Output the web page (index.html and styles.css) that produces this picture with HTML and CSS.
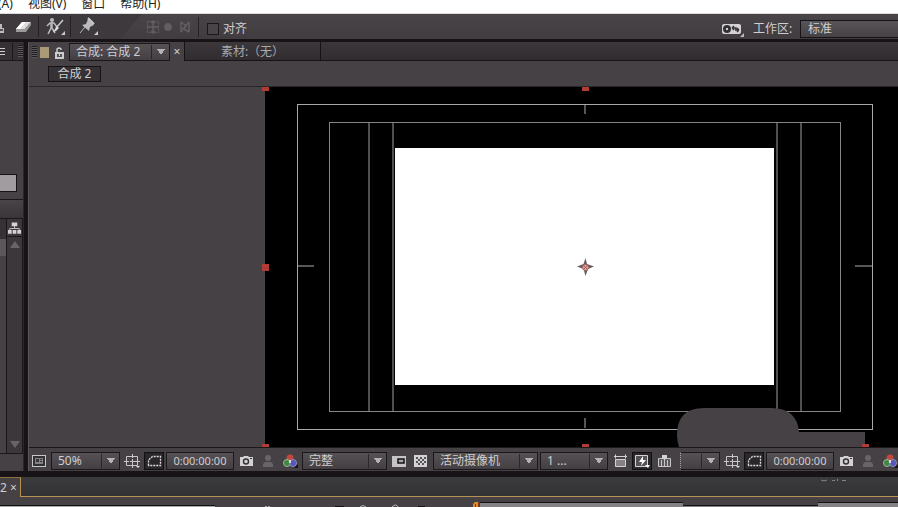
FILE: index.html
```
<!DOCTYPE html>
<html lang="zh-CN">
<head>
    <meta charset="UTF-8">
    <meta name="viewport" content="width=device-width, initial-scale=1.0">
    <title>合成 2</title>
    <link rel="stylesheet" href="styles.css">
</head>
<body>
    <!-- 图标定义 -->
    <svg class="defs" aria-hidden="true">
        <symbol id="i-view" viewBox="0 0 16 16">
            <rect x="1.500" y="2.500" width="13" height="11" fill="#333" stroke="#c9c6c9"/>
            <path d="M4 5h8v6H4z" fill="#858285"/>
            <path d="M5 6h3v3H5zM9 6h2v1H9zM9 8h2v1H9z" fill="#3a373a"/>
        </symbol>
        <symbol id="i-guides" viewBox="0 0 16 16">
            <path d="M2.500 3.500h11v9h-11zM0 8.500h5M11 8.500h5M8.500 1v4M8.500 11v4M6 8.500h5M8.500 6v5" fill="none" stroke="#c9c6c9"/>
            <path d="M12 13h4l-2 2z" fill="#ddd"/>
        </symbol>
        <symbol id="i-mask" viewBox="0 0 16 16">
            <path d="M2.500 12.500V7l4-3.500h8v9z" fill="none" stroke="#e0dde0" stroke-width="1.300" stroke-dasharray="2 1"/>
        </symbol>
        <symbol id="i-camera" viewBox="0 0 16 16">
            <path d="M2 4h3l1-1h4l1 1h4v9H2z" fill="#d5d2d5"/>
            <circle cx="8" cy="8.500" r="2.500" fill="#d5d2d5" stroke="#333" stroke-width="1.400"/>
            <path d="M12 5h2v1h-2z" fill="#333"/>
        </symbol>
        <symbol id="i-person" viewBox="0 0 16 16">
            <circle cx="8" cy="5" r="3" fill="#686568"/>
            <path d="M3 14v-3l2-2h6l2 2v3z" fill="#686568"/>
        </symbol>
        <symbol id="i-rgb" viewBox="0 0 16 16">
            <circle cx="8" cy="5" r="3.500" fill="#c4473d"/>
            <circle cx="5" cy="10" r="3.500" fill="#438546" stroke="#98ba97"/>
            <circle cx="11" cy="10" r="3.500" fill="#5457b7" stroke="#8a88bd"/>
            <path d="M7 7h2v3H7z" fill="#ddd"/>
            <path d="M16 11v4h-4z" fill="#161416"/>
        </symbol>
        <symbol id="i-roi" viewBox="0 0 16 16">
            <path d="M1 3h14v11H1z" fill="#c6c3c6"/>
            <path d="M7 6h6v4H7z" fill="#aaa" stroke="#111" stroke-width="1.500"/>
        </symbol>
        <symbol id="i-checker" viewBox="0 0 16 16">
            <path d="M1 2h13v12H1z" fill="#d5d2d5"/>
            <path d="M3 4h2v2H3zM7 4h2v2H7zM11 4h2v2h-2zM5 6h2v2H5zM9 6h2v2H9zM3 8h2v2H3zM7 8h2v2H7zM11 8h2v2h-2zM5 10h2v2H5zM9 10h2v2H9z" fill="#575457"/>
        </symbol>
        <symbol id="i-aspect" viewBox="0 0 16 16">
            <path d="M3.500 6.500h10v7h-10z" fill="#858285" stroke="#d5d2d5"/>
            <path d="M2 3.500h13M3.500 1.500v4M13.500 1.500v4" stroke="#d5d2d5" fill="none"/>
        </symbol>
        <symbol id="i-fast" viewBox="0 0 16 16">
            <path d="M1.500 2.500h12v11h-12z" fill="#555255" stroke="#d5d2d5"/>
            <path d="M9 3L5 9h3l-1 4 5-6H9z" fill="#fff"/>
            <path d="M11 12h5l-2 3z" fill="#fff"/>
        </symbol>
        <symbol id="i-timeline" viewBox="0 0 16 16">
            <path d="M2.500 5.500h12v8h-12zM5.500 7v6M8.500 4v10M11.500 7v6" fill="#5c595c" stroke="#c9c6c9"/>
            <path d="M6 2h5v3L8.500 7 6 5z" fill="#d5d2d5"/>
        </symbol>
        <symbol id="i-tree" viewBox="0 0 16 16">
            <path d="M8 5v4M3 12V8.500h10V12" fill="none" stroke="#c9c6c9"/>
            <path d="M5 2h6v4H5zM1 10h4v4H1zM6 10h4v4H6zM11 10h4v4h-4z" fill="#d5d2d5"/>
        </symbol>
    </svg>

    <nav class="menubar">
        <a href="#">(A)</a>
        <a href="#">视图(V)</a>
        <a href="#">窗口</a>
        <a href="#">帮助(H)</a>
    </nav>

    <!-- 工具栏 -->
    <header class="toolbar">
        <div class="tools">
            <button class="tool stamp" aria-label="仿制图章"><svg width="6" height="20" viewBox="0 0 6 20"><path d="M0 7h2v4h2v5H0z" fill="#bbb"/><path d="M0 12h3v2H0z" fill="#555"/></svg></button>
            <button class="tool eraser" aria-label="橡皮擦"><svg width="18" height="20" viewBox="0 0 18 20"><path d="M8 5h9l-6 7H2z" fill="#ddd"/><path d="M2 12h9l6-7v3l-5 7H2z" fill="#999"/><path d="M8 5h4l-6 7H2z" fill="#fff"/></svg></button>
            <button class="tool roto" aria-label="Roto 笔刷"><svg width="22" height="22" viewBox="0 0 22 22"><circle cx="7" cy="4" r="2" fill="#bbb"/><path d="M2 10l3-3h4l3 4M6 7v5l-3 6M7 12l3 5M7 6v6" fill="none" stroke="#bbb" stroke-width="1.500"/><path d="M18 4l-7 8" stroke="#ccc" stroke-width="1.500"/><path d="M12 10l2 2-3 3-3 1z" fill="#ddd"/><path d="M20 15v4h-4z" fill="#ccc"/></svg></button>
            <button class="tool pin" aria-label="操控点"><svg width="22" height="22" viewBox="0 0 22 22"><path d="M10 3l6 6-2 1-2 1-1 4-7-6 4-1z" fill="#bbb"/><path d="M7 11l-5 6" stroke="#bbb"/><path d="M10 2l6 6" stroke="#ccc" stroke-width="2"/><path d="M20 15v4h-4z" fill="#ccc"/></svg></button>
        </div>
        <div class="axes">
            <svg width="46" height="14" viewBox="0 0 46 14" fill="none" stroke="#625f62"><path d="M1.500 1.500h11v11h-11z" stroke-dasharray="2 1"/><path d="M7 1v12M1 7h12M5 3l2-2 2 2M5 11l2 2 2-2" stroke-width="1.500"/><circle cx="22" cy="7" r="3.500" fill="#625f62"/><path d="M35 2v10M43 2v10M35 2l4 3M43 2l-8 10M36 8l7 4M39 4v4" stroke-width="1.500"/></svg>
        </div>
        <label class="snap"><input type="checkbox">对齐</label>
        <div class="workspace-pick">
            <svg width="24" height="16" viewBox="0 0 24 16"><rect x="1" y="3" width="19" height="10" rx="2" fill="#d5d2d5"/><circle cx="6" cy="8" r="2.500" fill="none" stroke="#333" stroke-width="3"/><circle cx="6" cy="8" r="1" fill="#ddd"/><path d="M11 7h4v2M11 7l2-2M11 7l2 2M14 9h4M18 9l-2-2M18 9l-2 2" stroke="#333" fill="none" stroke-width="1.300"/><path d="M23 12v4h-4z" fill="#bbb"/></svg>
            <label for="workspace">工作区:</label>
            <select id="workspace"><option>标准</option></select>
        </div>
    </header>

    <main class="workspace">
        <!-- 项目面板 -->
        <aside class="project">
            <div class="project-tabs"><span class="lines"></span><span class="grip"></span></div>
            <div class="project-info"><button class="thumb" aria-label="缩览图"></button></div>
            <div class="project-search"></div>
            <div class="project-list">
                <div class="rows"></div>
                <div class="scroll">
                    <button class="flow" aria-label="流程图"><svg width="15" height="16"><use href="#i-tree"/></svg></button>
                    <span class="arrow up"></span>
                    <span class="arrow down"></span>
                </div>
            </div>
            <div class="project-foot"></div>
        </aside>

        <!-- 合成面板 -->
        <section class="comp">
            <div class="comp-tabs">
                <div class="comp-active">
                    <span class="grip"></span>
                    <span class="label-color"></span>
                    <svg width="9" height="13" viewBox="0 0 9 13"><path d="M1 7h7v5H1z" fill="#555" stroke="#ccc" stroke-width="2"/><path d="M2 6V3q2-2 4 0v1" fill="none" stroke="#ccc" stroke-width="1.500"/><path d="M4 8h1v2H4z" fill="#ddd"/></svg>
                    <span class="drop tab-drop"><select aria-label="合成"><option>合成: 合成 2</option></select></span>
                    <button class="close" aria-label="关闭">×</button>
                </div>
                <button class="footage">素材:（无）</button>
            </div>
            <div class="comp-path"><button>合成 2</button></div>
            <div class="stage">
                <!-- 640x360 画布，带安全框 -->
                <svg class="canvas" width="640" height="360" viewBox="0 0 640 360">
                    <rect width="640" height="360" fill="#000"/>
                    <path d="M104 36v288M128 36v288M512 36v288M536 36v288" stroke="#504e50" stroke-width="2"/>
                    <rect x="130" y="61" width="379" height="237" fill="#fff"/>
                    <g fill="none">
                        <rect x="32.500" y="17.500" width="575" height="325" stroke="#a8a8a8"/>
                        <rect x="64.500" y="35.500" width="511" height="289" stroke="#858585"/>
                        <path d="M320 18v9M320 331v10M33 179h16M590 179h17" stroke="#585658" stroke-width="2"/>
                    </g>
                    <path d="M320.500 171l1.500 6 7 2.500-6 2.500-2.500 7-2-7-6.500-2.500 6.500-2.500z" fill="#6c5a60"/>
                    <circle cx="320.500" cy="180.500" r="3" fill="#d9a7a5" stroke="#a3605c"/>
                    <path d="M319 179l3 3M322 179l-3 3" stroke="#a3605c"/>
                    <path d="M414 360q-2-6-2-12 0-27 27-27h67q26 0 28 24h66v15z" fill="#454145"/>
                    <path d="M-3 0h7v4h-7zM317 0h7v4h-7zM-3 177h7v7h-7zM-3 357h7v3h-7zM317 357h7v3h-7zM597 357h7v3h-7z" fill="#b23b35"/>
                </svg>
            </div>
            <div class="comp-foot">
                <button class="icon" aria-label="始终预览"><svg width="16" height="16"><use href="#i-view"/></svg></button>
                <span class="drop zoom"><select aria-label="放大率"><option>50%</option></select></span>
                <button class="icon" aria-label="参考线"><svg width="16" height="16"><use href="#i-guides"/></svg></button>
                <button class="icon on" aria-label="蒙版"><svg width="16" height="16"><use href="#i-mask"/></svg></button>
                <button class="time">0:00:00:00</button>
                <button class="icon" aria-label="快照"><svg width="16" height="16"><use href="#i-camera"/></svg></button>
                <button class="icon" aria-label="显示快照"><svg width="16" height="16"><use href="#i-person"/></svg></button>
                <button class="icon" aria-label="通道"><svg width="16" height="16"><use href="#i-rgb"/></svg></button>
                <span class="drop quality"><select aria-label="分辨率"><option>完整</option></select></span>
                <button class="icon" aria-label="目标区域"><svg width="16" height="16"><use href="#i-roi"/></svg></button>
                <button class="icon" aria-label="透明网格"><svg width="16" height="16"><use href="#i-checker"/></svg></button>
                <span class="drop camera"><select aria-label="3D 视图"><option>活动摄像机</option></select></span>
                <span class="drop views"><select aria-label="视图布局"><option>1 ...</option></select></span>
                <button class="icon" aria-label="像素长宽比"><svg width="16" height="16"><use href="#i-aspect"/></svg></button>
                <button class="icon on" aria-label="快速预览"><svg width="16" height="16"><use href="#i-fast"/></svg></button>
                <button class="icon" aria-label="时间轴"><svg width="16" height="16"><use href="#i-timeline"/></svg></button>
                <span class="drop cut"><select aria-label="放大率"><option></option></select></span>
                <button class="icon" aria-label="参考线"><svg width="16" height="16"><use href="#i-guides"/></svg></button>
                <button class="icon on" aria-label="蒙版"><svg width="16" height="16"><use href="#i-mask"/></svg></button>
                <button class="time">0:00:00:00</button>
                <button class="icon" aria-label="快照"><svg width="16" height="16"><use href="#i-camera"/></svg></button>
                <button class="icon" aria-label="显示快照"><svg width="16" height="16"><use href="#i-person"/></svg></button>
                <button class="icon" aria-label="通道"><svg width="16" height="16"><use href="#i-rgb"/></svg></button>
            </div>
        </section>
    </main>

    <!-- 时间轴面板 -->
    <footer class="timeline">
        <div class="timeline-tabs">
            <div class="timeline-tab">2 <button class="close" aria-label="关闭">×</button></div>
            <div class="timeline-rest"><svg width="28" height="6" viewBox="0 0 28 6"><path d="M1 3q3 2 6 0M12 3.500h3M17.500 2v2M22 3.500h4" stroke="#858285" fill="none"/></svg></div>
        </div>
        <div class="timeline-head">
            <div class="timecode"></div>
            <svg class="switches" width="257" height="10" viewBox="0 0 257 10"><path d="M50 9h2v1h-2zM53 9h2v1h-2z" fill="#aaa"/><path d="M120 9.500h9M203 9.500h7" stroke="#161416"/><path d="M145 10q3-3 6 0M177 10q4-4 6 0" stroke="#bbb" fill="none"/></svg>
            <svg class="playhead" width="8" height="10" viewBox="0 0 8 10"><path d="M1 10V7l2-2h4v5z" fill="#e08a2c"/><path d="M3.500 10V7M6.500 5v5" stroke="#7a3c18"/></svg>
            <div class="range"></div>
            <div class="range low"></div>
            <div class="range"></div>
        </div>
    </footer>
</body>
</html>
```
FILE: styles.css
```
* {
    box-sizing: border-box;
}
body {
    margin: 0;
    height: 100vh;
    display: flex;
    flex-direction: column;
    overflow: hidden;
    background-color: #171317;
    color: #d0cdd0;
    font-family: "Noto Sans", "Noto Sans CJK SC", sans-serif;
    font-size: 12px;
    line-height: 16px;
}
button,
select {
    margin: 0;
    padding: 0;
    border: 0;
    border-radius: 0;
    background: none;
    color: inherit;
    font: inherit;
    appearance: none;
}
svg {
    display: block;
    flex: none;
}
.defs {
    width: 0;
    height: 0;
    position: absolute;
}

/* 菜单栏 */
.menubar {
    flex: none;
    height: 14px;
    display: flex;
    align-items: flex-end;
    gap: 15px;
    padding-bottom: 1px;
    background-color: #fff;
    border-bottom: 1px solid #ddd;
}
.menubar a {
    color: #222;
    text-decoration: none;
    white-space: nowrap;
}
.menubar a:first-child {
    margin-left: -2px;
}

/* 工具栏 */
.toolbar {
    flex: none;
    height: 25px;
    margin-bottom: 3px;
    display: flex;
    align-items: center;
    background: linear-gradient(#484448, #403c40);
}
.tools {
    width: 142px;
    height: 25px;
    display: flex;
    align-items: center;
    background-color: #3d393d;
    clip-path: polygon(0 0, 100% 0, 120px 100%, 0 100%);
}
.tool {
    height: 21px;
    display: flex;
    align-items: center;
}
.stamp {
    width: 14px;
}
.eraser {
    width: 25px;
    border-right: 1px solid #242124;
}
.roto {
    width: 32px;
    padding-left: 6px;
    border-right: 1px solid #242124;
}
.pin {
    padding-left: 7px;
}
.axes {
    width: 57px;
    height: 20px;
    padding: 3px 0 0 4px;
    border-right: 1px solid #242124;
}
.snap {
    display: flex;
    align-items: center;
    gap: 4px;
    margin-left: 8px;
    padding-top: 4px;
}
.snap input {
    appearance: none;
    width: 12px;
    height: 12px;
    margin: 0;
    border: 1px solid #1b181b;
    background-color: #484448;
}
.workspace-pick {
    margin-left: auto;
    display: flex;
    align-items: center;
    height: 25px;
    padding-top: 4px;
}
.workspace-pick label {
    width: 47px;
    margin-left: 8px;
    white-space: nowrap;
}
.workspace-pick select {
    width: 98px;
    height: 18px;
    padding-left: 7px;
    border: 1px solid #161316;
    border-right: 0;
    background: linear-gradient(#585458, #454145);
}

.workspace {
    flex: 1;
    min-height: 0;
    display: flex;
    gap: 4px;
}
.grip {
    width: 5px;
    height: 12px;
    background: repeating-linear-gradient(#1f1c1f 0 1px, #5b575b 1px 2px);
}

/* 项目面板 */
.project {
    width: 24px;
    flex: none;
    display: flex;
    flex-direction: column;
    background-color: #454145;
    border-right: 1px solid #2a272a;
}
.project-tabs {
    height: 19px;
    display: flex;
    align-items: center;
    justify-content: space-between;
    background-color: #353135;
    border-bottom: 1px solid #1b181b;
}
.project-tabs .lines {
    width: 13px;
    height: 17px;
    border-right: 1px solid #1b181b;
    background: repeating-linear-gradient(#d0cdd0 0 1px, #353135 1px 3px) 0 5px / 5px 7px no-repeat;
}
.project-info {
    height: 138px;
    display: flex;
    align-items: flex-end;
    padding-bottom: 7px;
}
.thumb {
    width: 17px;
    height: 18px;
    background-color: #a09ca0;
    border: 1px solid #161316;
    border-left: 0;
}
.project-search {
    height: 19px;
    background: linear-gradient(#484448, #393539);
    border-top: 1px solid #1b181b;
}
.project-list {
    flex: 1;
    display: flex;
    border-top: 1px solid #1b181b;
    border-bottom: 1px solid #1b181b;
}
.rows {
    width: 6px;
    background: linear-gradient(#353135 0 20px, #5b575b 20px 37px, #454145 37px);
}
.scroll {
    flex: 1;
    display: flex;
    flex-direction: column;
    align-items: center;
    background-color: #3b373b;
    border-left: 1px solid #1b181b;
    border-right: 1px solid #1b181b;
}
.flow {
    height: 18px;
    border-bottom: 1px solid #1b181b;
}
.arrow {
    border: 5px solid transparent;
}
.arrow.up {
    margin-top: -1px;
    border-bottom: 7px solid #686468;
}
.arrow.down {
    margin-top: auto;
    border-top: 7px solid #686468;
}
.project-foot {
    height: 17px;
}

/* 合成面板 */
.comp {
    flex: 1;
    min-width: 0;
    display: flex;
    flex-direction: column;
    background-color: #454145;
    border-left: 1px solid #5b575b;
}
.comp-tabs {
    height: 19px;
    flex: none;
    display: flex;
    background: linear-gradient(#3b373b, #302c30);
    border-bottom: 1px solid #161316;
}
.comp-active {
    width: 156px;
    height: 19px;
    display: flex;
    align-items: center;
    padding: 1px 0 0 3px;
    background-color: #454145;
    border-right: 1px solid #161316;
}
.label-color {
    width: 10px;
    height: 11px;
    margin: 0 6px 0 3px;
    background-color: #aa9a75;
}
.footage {
    width: 136px;
    height: 18px;
    padding-top: 2px;
    color: #aaa7aa;
    text-align: center;
    border-right: 1px solid #161316;
}
.close {
    width: 15px;
    text-align: center;
}
.comp-path {
    height: 26px;
    flex: none;
    display: flex;
    align-items: center;
    padding-left: 19px;
    border-bottom: 1px solid #2a272a;
}
.comp-path button {
    width: 53px;
    height: 16px;
    background-color: #353135;
    border: 1px solid #161316;
    line-height: 14px;
}
.stage {
    flex: 1;
    min-height: 0;
    padding-left: 236px;
    overflow: hidden;
}
.canvas {
    overflow: visible;
}

/* 下拉框 */
.drop {
    display: grid;
    align-items: center;
    height: 18px;
    flex: none;
    border: 1px solid #1b181b;
    background: linear-gradient(#555155, #433f43);
}
.drop select,
.drop::after {
    grid-area: 1 / 1;
}
.drop select {
    width: 100%;
    height: 16px;
    padding: 0 0 0 6px;
}
.drop::after {
    content: "";
    justify-self: end;
    width: 17px;
    height: 14px;
    border-left: 1px solid #2a272a;
    background: conic-gradient(from -35deg at 50% 100%, #b5b2b5 70deg, transparent 0) center / 8px 6px no-repeat;
    pointer-events: none;
}
.tab-drop {
    width: 101px;
    margin-left: 5px;
}

.comp-foot {
    height: 24px;
    flex: none;
    display: flex;
    align-items: center;
    gap: 2px;
    padding-top: 2px;
    overflow: hidden;
    border-top: 1px solid #1b181b;
}
.icon {
    width: 20px;
    height: 18px;
    flex: none;
    display: flex;
    align-items: center;
    justify-content: center;
}
.icon.on {
    background-color: #2a272a;
    border: 1px solid #111;
}
.time {
    width: 68px;
    height: 18px;
    flex: none;
    border: 1px solid #1b181b;
    background: linear-gradient(#555155, #433f43);
    font-size: 11px;
}
.zoom {
    width: 69px;
}
.quality {
    width: 85px;
}
.camera {
    width: 105px;
}
.views {
    width: 68px;
}
.cut {
    width: 40px;
    margin-left: 4px;
    border-left: 1px dotted #aaa7aa;
}

/* 时间轴 */
.timeline {
    flex: none;
    margin-top: 6px;
    background-color: #454145;
}
.timeline-tabs {
    height: 20px;
    display: flex;
}
.timeline-tab {
    width: 21px;
    display: flex;
    align-items: center;
    border-top: 1px solid #8d713c;
    border-right: 1px solid #b89250;
}
.timeline-rest {
    flex: 1;
    display: flex;
    justify-content: flex-end;
    padding-right: 50px;
    background: linear-gradient(#3b3a3d, #323134);
    border-bottom: 1px solid #b89250;
}
.timeline-head {
    height: 10px;
    display: flex;
    align-items: flex-end;
}
.timecode {
    width: 215px;
    height: 2px;
    background-color: #aaa;
    border-top: 1px solid #111;
}
.range {
    flex: 203;
    height: 5px;
    background-color: #858285;
    border-top: 1px solid #161316;
}
.range.low {
    flex: 135;
    height: 2px;
}
.range:last-child {
    flex: 80;
}
```
